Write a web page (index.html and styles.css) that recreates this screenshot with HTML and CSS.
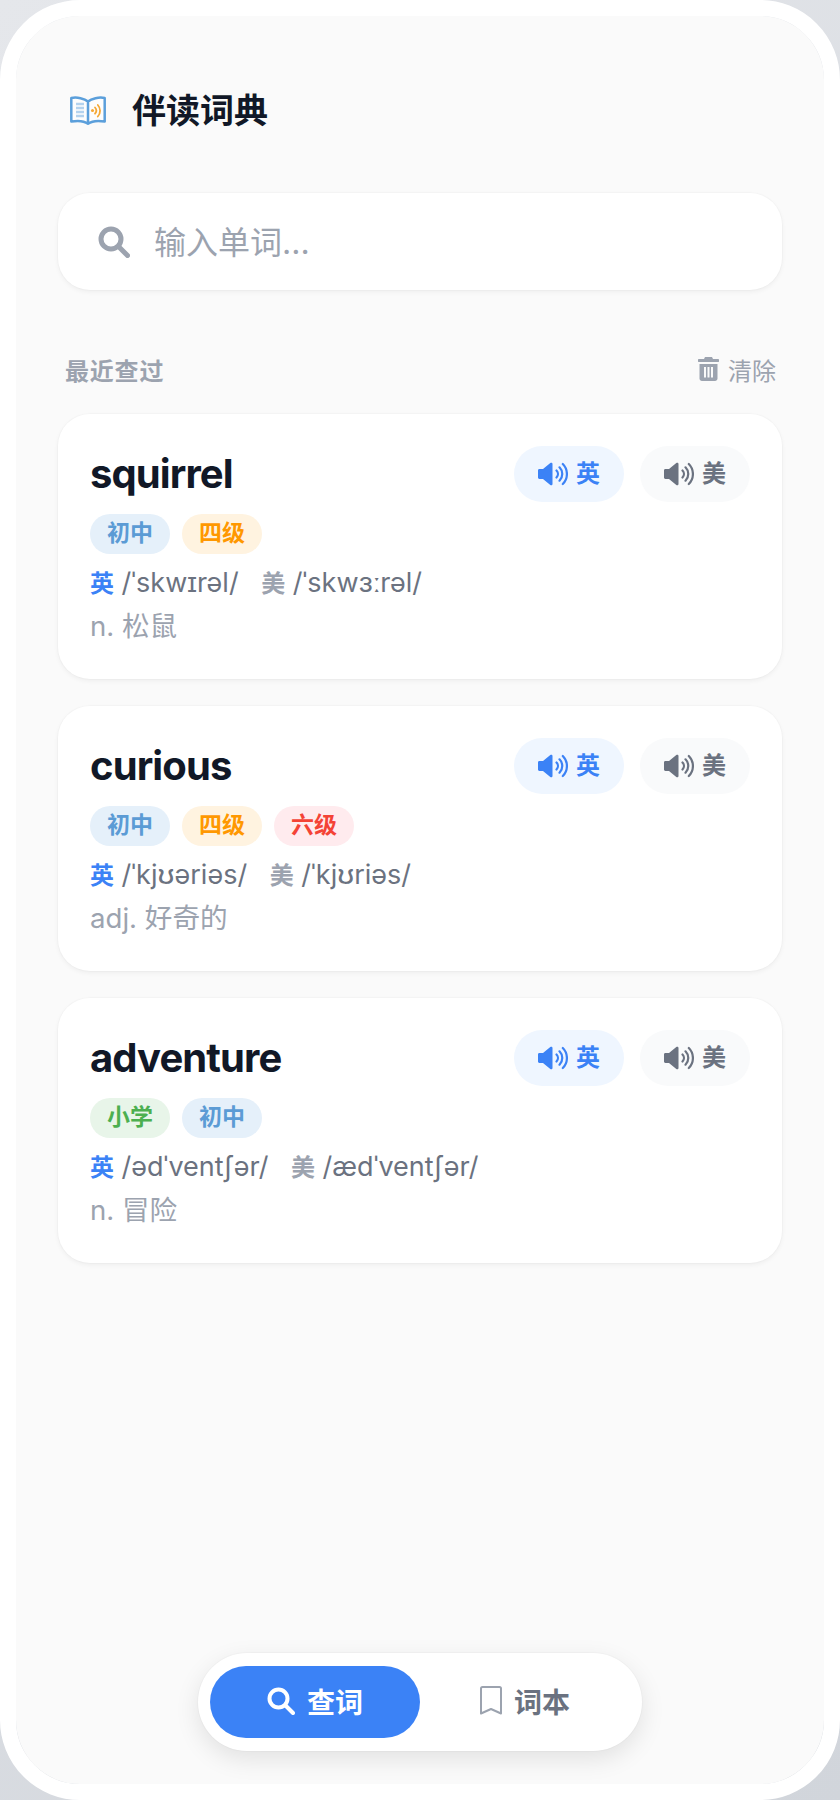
FILE: index.html
```html
<!DOCTYPE html>
<html lang="zh-CN">
<head>
    <meta charset="UTF-8">
    <meta name="viewport" content="width=device-width, initial-scale=1.0">
    <title>伴读词典</title>
    <link rel="stylesheet" href="styles.css">
</head>
<body>

    <!-- Shared icons -->
    <svg class="icon-defs" aria-hidden="true">
        <symbol id="icon-speaker" viewBox="0 0 30 24">
            <path d="M0 8.500c0-.8.6-1.400 1.400-1.400H5L12.300 1c1-.8 2.200-.2 2.200 1v20c0 1.200-1.200 1.800-2.200 1L5 16.900H1.400c-.8 0-1.400-.6-1.400-1.400z" fill="currentColor"/>
            <path d="M18.500 8.500c1.900 2 1.900 5 0 7M21.500 5.300c3.700 3.700 3.700 9.700 0 13.400M24.800 2c5.500 5.500 5.500 14.500 0 20" fill="none" stroke="currentColor" stroke-width="2.200" stroke-linecap="round"/>
        </symbol>
    </svg>

    <div class="device">
        <!-- Header -->
        <header class="app-header">
            <svg class="logo" viewBox="0 0 36 29" aria-hidden="true">
                <path d="M18 5.500C14.500 2.500 7 .8 1.300 2V25.500C7 24.500 14 24.800 18 27.700C22 24.800 29 24.500 34.700 25.500V2C29 .8 21.500 2.500 18 5.500Z M18 5.500V27" fill="#fdfdfd" stroke="#5b9fdb" stroke-width="2.500" stroke-linejoin="round"/>
                <path d="M6 8H14M6 12H14M6 16H14M6 20H14" stroke="#b3d2ee" stroke-width="2.400"/>
                <circle cx="22.500" cy="14.500" r="1.500" fill="#f5a936"/>
                <path d="M25 11.500c1.600 1.800 1.600 4.400 0 6.200M27.800 9c3 3.200 3 8.300 0 11.500" fill="none" stroke="#f5a936" stroke-width="1.800" stroke-linecap="round"/>
            </svg>
            <h1 class="app-title">伴读词典</h1>
        </header>

        <!-- Search box -->
        <div class="search-box">
            <svg class="search-icon" viewBox="0 0 32 32" aria-hidden="true">
                <circle cx="13" cy="13" r="10" fill="none" stroke="currentColor" stroke-width="5"/>
                <path d="M21 21l8.500 8.500" stroke="currentColor" stroke-width="5" stroke-linecap="round"/>
            </svg>
            <span class="search-placeholder">输入单词...</span>
        </div>

        <!-- Recent words -->
        <div class="recent-head">
            <span class="recent-title">最近查过</span>
            <span class="clear-btn">
                <svg class="trash-icon" viewBox="0 0 21 24" aria-hidden="true">
                    <path d="M7 0h7l1 2h5c.6 0 1 .4 1 1v1.500c0 .3-.2.500-.5.500H.5C.2 5 0 4.800 0 4.500V3c0-.6.4-1 1-1h5z" fill="currentColor"/>
                    <path fill-rule="evenodd" d="M1.500 7h18v14.500c0 1.400-1.100 2.500-2.500 2.500H4c-1.400 0-2.500-1.100-2.500-2.500zM6 10v10.500h2V10zM9.500 10v10.500h2V10zM13 10v10.500h2V10z" fill="currentColor"/>
                </svg>
                <span class="clear-text">清除</span>
            </span>
        </div>

        <div class="word-list">
            <article class="word-card">
                <div class="word-top">
                    <div class="word-main">
                        <h2 class="word">squirrel</h2>
                        <div class="tags">
                            <span class="tag tag-middle">初中</span>
                            <span class="tag tag-cet4">四级</span>
                        </div>
                    </div>
                    <div class="audio-btns">
                        <span class="audio-btn audio-uk"><svg class="speaker"><use href="#icon-speaker"/></svg>英</span>
                        <span class="audio-btn audio-us"><svg class="speaker"><use href="#icon-speaker"/></svg>美</span>
                    </div>
                </div>
                <p class="phonetic"><b class="label-uk">英</b> /ˈskwɪrəl/ <b class="label-us">美</b> /ˈskwɜːrəl/</p>
                <p class="meaning">n. 松鼠</p>
            </article>

            <article class="word-card">
                <div class="word-top">
                    <div class="word-main">
                        <h2 class="word">curious</h2>
                        <div class="tags">
                            <span class="tag tag-middle">初中</span>
                            <span class="tag tag-cet4">四级</span>
                            <span class="tag tag-cet6">六级</span>
                        </div>
                    </div>
                    <div class="audio-btns">
                        <span class="audio-btn audio-uk"><svg class="speaker"><use href="#icon-speaker"/></svg>英</span>
                        <span class="audio-btn audio-us"><svg class="speaker"><use href="#icon-speaker"/></svg>美</span>
                    </div>
                </div>
                <p class="phonetic"><b class="label-uk">英</b> /ˈkjʊəriəs/ <b class="label-us">美</b> /ˈkjʊriəs/</p>
                <p class="meaning">adj. 好奇的</p>
            </article>

            <article class="word-card">
                <div class="word-top">
                    <div class="word-main">
                        <h2 class="word">adventure</h2>
                        <div class="tags">
                            <span class="tag tag-primary">小学</span>
                            <span class="tag tag-middle">初中</span>
                        </div>
                    </div>
                    <div class="audio-btns">
                        <span class="audio-btn audio-uk"><svg class="speaker"><use href="#icon-speaker"/></svg>英</span>
                        <span class="audio-btn audio-us"><svg class="speaker"><use href="#icon-speaker"/></svg>美</span>
                    </div>
                </div>
                <p class="phonetic"><b class="label-uk">英</b> /ədˈventʃər/ <b class="label-us">美</b> /ædˈventʃər/</p>
                <p class="meaning">n. 冒险</p>
            </article>
        </div>

        <!-- Bottom tab bar floats over the page -->
        <nav class="tab-bar">
            <span class="tab tab-active">
                <svg class="tab-icon" viewBox="0 0 28 28" aria-hidden="true">
                    <circle cx="11.500" cy="11.500" r="9" fill="none" stroke="currentColor" stroke-width="4"/>
                    <path d="M18.500 18.500l7.500 7.500" stroke="currentColor" stroke-width="4" stroke-linecap="round"/>
                </svg>
                查词
            </span>
            <span class="tab">
                <svg class="bookmark-icon" viewBox="0 0 22 29" aria-hidden="true">
                    <path d="M2.500 1h17c.8 0 1.500.7 1.500 1.500V27.500L11 23 1 27.500V2.500C1 1.700 1.700 1 2.500 1z" fill="none" stroke="#9ca3af" stroke-width="2" stroke-linejoin="round"/>
                </svg>
                词本
            </span>
        </nav>
    </div>

</body>
</html>
```

FILE: styles.css
```css
/* Reset default styling */
* {
    margin: 0;
    padding: 0;
    box-sizing: border-box;
}

body {
    width: 840px;
    height: 1800px;
    overflow: hidden;
    background: linear-gradient(135deg, #e5e7eb, #d1d5db);
    font-family: Inter, "Noto Sans CJK SC", sans-serif;
}

.icon-defs {
    display: none;
}

/* Phone frame */
.device {
    position: relative;
    height: 1800px;
    padding: 78px 42px 0;
    border: 16px solid #fff;
    border-radius: 80px;
    background: #fafafa;
    background-clip: padding-box;
    overflow: hidden;
}

/* Header */
.app-header {
    display: flex;
    align-items: center;
    gap: 26px;
    height: 32px;
    padding-left: 12px;
}

.logo {
    width: 36px;
    height: 29px;
}

.app-title {
    padding-bottom: 4px;
    font-size: 34px;
    font-weight: 700;
    color: #111827;
}

/* Search */
.search-box {
    display: flex;
    align-items: center;
    height: 97px;
    margin-top: 67px;
    padding-left: 40px;
    border-radius: 32px;
    background: #fff;
    box-shadow: 0 2px 5px rgba(0, 0, 0, 0.05), 0 0 0 1px rgba(0, 0, 0, 0.015);
}

.search-icon {
    width: 32px;
    height: 32px;
    color: #9ca3af;
}

.search-placeholder {
    margin-left: 24px;
    padding-bottom: 4px;
    font-size: 32px;
    color: #9ca3af;
}

/* Recent words */
.recent-head {
    display: flex;
    justify-content: space-between;
    align-items: center;
    height: 34px;
    margin-top: 62px;
    padding: 0 6px 0 7px;
}

.recent-title {
    font-size: 24px;
    font-weight: 600;
    letter-spacing: 0.8px;
    color: #9ca3af;
}

.clear-btn {
    display: flex;
    align-items: center;
    gap: 9px;
    font-size: 24px;
    color: #9ca3af;
}

.trash-icon {
    width: 21px;
    height: 24px;
}

.word-list {
    display: flex;
    flex-direction: column;
    gap: 27px;
    margin-top: 28px;
}

.word-card {
    height: 265px;
    padding: 32px;
    border-radius: 32px;
    background: #fff;
    box-shadow: 0 2px 5px rgba(0, 0, 0, 0.05), 0 0 0 1px rgba(0, 0, 0, 0.015);
}

.word-top {
    display: flex;
    justify-content: space-between;
    align-items: flex-start;
}

.word {
    padding-top: 1px;
    font-size: 40px;
    line-height: 54px;
    font-weight: 700;
    letter-spacing: -0.9px;
    color: #111827;
}

.tags {
    display: flex;
    gap: 12px;
    margin-top: 13px;
}

.tag {
    width: 80px;
    height: 40px;
    border-radius: 20px;
    font-size: 23px;
    font-weight: 600;
    line-height: 38px;
    text-align: center;
}

.tag-primary {
    background: #e8f5e9;
    color: #4caf50;
}

.tag-middle {
    background: #e5f0fa;
    color: #5b9bd5;
}

.tag-cet4 {
    background: #fff3e0;
    color: #ff9800;
}

.tag-cet6 {
    background: #ffebee;
    color: #f44336;
}

/* Pronunciation buttons */
.audio-btns {
    display: flex;
    gap: 16px;
}

.audio-btn {
    display: flex;
    justify-content: center;
    align-items: center;
    gap: 8px;
    width: 110px;
    height: 56px;
    padding-bottom: 6px;
    border-radius: 28px;
    font-size: 24px;
    font-weight: 600;
}

.audio-uk {
    background: #eff6ff;
    color: #3b82f6;
}

.audio-us {
    background: #f9fafb;
    color: #6b7280;
}

.speaker {
    width: 30px;
    height: 24px;
    margin-top: 6px;
}

/* Phonetics and meaning */
.phonetic {
    margin-top: 9px;
    font-size: 27px;
    line-height: 40px;
    color: #6b7280;
}

.phonetic b {
    font-size: 24px;
    font-weight: 600;
}

.label-uk {
    color: #3b82f6;
}

.label-us {
    margin-left: 15px;
    color: #9ca3af;
}

.meaning {
    margin-top: 2px;
    font-size: 27.6px;
    line-height: 40px;
    color: #9ca3af;
}

/* Bottom tab bar */
.tab-bar {
    position: absolute;
    left: 182px;
    bottom: 33px;
    display: flex;
    width: 444px;
    height: 98px;
    padding: 13px 12px;
    border-radius: 49px;
    background: #fff;
    box-shadow: 0 8px 24px rgba(0, 0, 0, 0.1), 0 0 0 1px rgba(0, 0, 0, 0.02);
}

.tab {
    display: flex;
    flex: 1;
    justify-content: center;
    align-items: center;
    gap: 12px;
    padding-bottom: 3px;
    border-radius: 36px;
    font-size: 28px;
    font-weight: 600;
    color: #6b7280;
}

.tab-active {
    background: #3b82f6;
    color: #fff;
}

.tab-icon {
    width: 28px;
    height: 28px;
}

.bookmark-icon {
    width: 22px;
    height: 29px;
}
```
